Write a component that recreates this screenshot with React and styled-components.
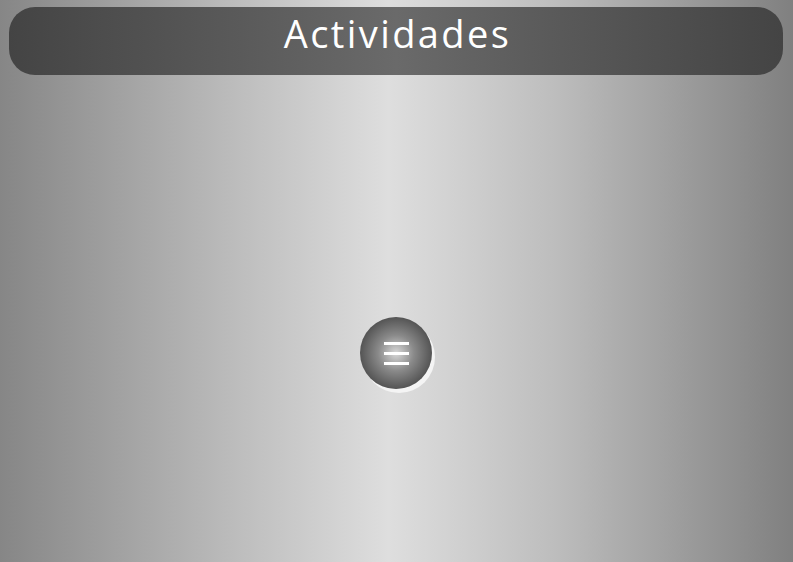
import React from 'react'
import styled, { createGlobalStyle } from 'styled-components'

const GlobalStyle = createGlobalStyle`
  html, body {
    margin: 0;
    padding: 0;
    height: 100%;
  }
  body {
    font-family: "Open Sans", "DejaVu Sans", sans-serif;
  }
  #root {
    height: 100%;
  }
`

const Page = styled.div`
  height: 100%;
  box-sizing: border-box;
  padding: 7px 10px 0 9px;
  display: flex;
  flex-direction: column;
  background: linear-gradient(to right, #868686 0%, #bdbdbd 30%, #dedede 49%, #bdbdbd 70%, #808080 100%);
`

const Header = styled.header`
  height: 68px;
  border-radius: 26px;
  background: linear-gradient(to right, #444444 0%, #5a5a5a 30%, #6a6a6a 50%, #5a5a5a 70%, #444444 100%);
  display: flex;
  align-items: center;
  justify-content: center;

  h1 {
    margin: 0 0 14px 3px;
    color: #fff;
    font-weight: 400;
    font-size: 38px;
    letter-spacing: 2.4px;
    line-height: 1.2;
  }
`

const Main = styled.main`
  flex: 1;
  display: flex;
  align-items: flex-start;
  justify-content: center;
  padding-top: 242px;
`

const MenuButton = styled.button`
  width: 72px;
  height: 72px;
  border: none;
  border-radius: 50%;
  padding: 0;
  background: radial-gradient(circle at 50% 50%, #d8d8d8 0%, #8a8a8a 35%, #555 70%, #3a3a3a 100%);
  box-shadow: 3px 4px 0 #f4f4f4;
  display: flex;
  flex-direction: column;
  align-items: center;
  justify-content: center;
  gap: 7px;
  cursor: pointer;
`

const Bar = styled.span`
  display: block;
  width: 25px;
  height: 3px;
  background: #fff;
`

export default function App() {
  return (
    <>
      <GlobalStyle />
      <Page>
        <Header>
          <h1>Actividades</h1>
        </Header>
        <Main>
          <MenuButton aria-label="menu">
            <Bar />
            <Bar />
            <Bar />
          </MenuButton>
        </Main>
      </Page>
    </>
  )
}
